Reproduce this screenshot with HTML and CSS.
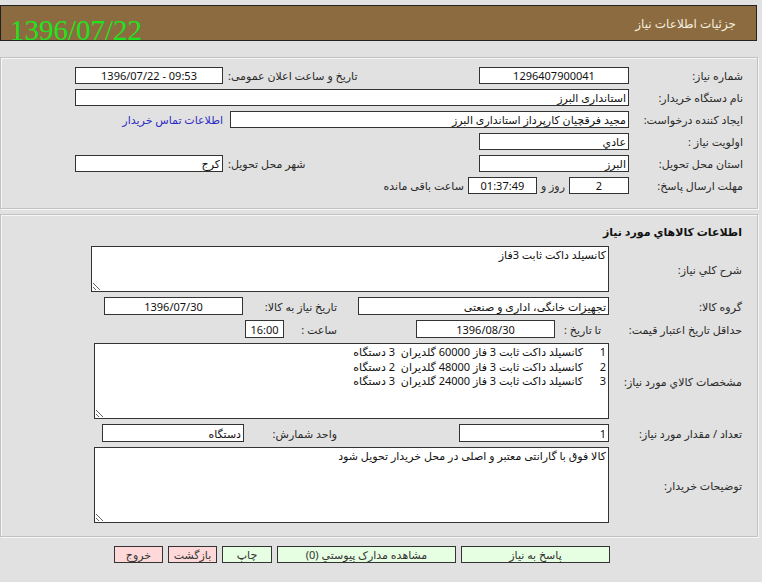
FILE: index.html
```html
<!DOCTYPE html>
<html lang="fa">
<head>
    <meta charset="UTF-8">
    <title>جزئیات اطلاعات نیاز</title>
    <link rel="stylesheet" href="styles.css">
</head>
<body>
<div class="page" dir="rtl">
    <div class="topbar">
        <span class="bar-title">جزئیات اطلاعات نیاز</span>
        <span class="bar-date" dir="ltr">1396/07/22</span>
    </div>

    <!-- need header info -->
    <div class="panel info">
        <div class="row">
            <span class="lbl">شماره نیاز:</span>
            <input class="fld w150 center" value="1296407900041" readonly>
            <span class="cell-end">تاریخ و ساعت اعلان عمومی:</span>
            <input class="fld w148 center" value="1396/07/22 - 09:53" dir="ltr" readonly>
        </div>
        <div class="row">
            <span class="lbl">نام دستگاه خریدار:</span>
            <input class="fld w554" value="استانداری البرز" readonly>
        </div>
        <div class="row">
            <span class="lbl">ایجاد کننده درخواست:</span>
            <input class="fld w399" value="مجید فرقچیان کارپرداز استانداری البرز" readonly>
            <a class="contact" href="#">اطلاعات تماس خریدار</a>
        </div>
        <div class="row">
            <span class="lbl">اولویت نیاز :</span>
            <input class="fld w150" value="عادي" readonly>
        </div>
        <div class="row">
            <span class="lbl">استان محل تحویل:</span>
            <input class="fld w150" value="البرز" readonly>
            <span class="cell-end">شهر محل تحویل:</span>
            <input class="fld w148" value="کرج" readonly>
        </div>
        <div class="row">
            <span class="lbl">مهلت ارسال پاسخ:</span>
            <input class="fld w60 center" value="2" readonly>
            <span class="txt">روز و</span>
            <input class="fld w69 center" value="01:37:49" readonly>
            <span class="txt">ساعت باقی مانده</span>
        </div>
    </div>

    <!-- goods -->
    <div class="panel goods">
        <div class="sec-title">اطلاعات کالاهاي مورد نیاز</div>
        <div class="rows">
            <div class="row">
                <span class="lbl">شرح کلي نیاز:</span>
                <textarea class="area w518 h46" readonly>کانسیلد داکت ثابت 3فاز</textarea>
            </div>
            <div class="row">
                <span class="lbl">گروه کالا:</span>
                <input class="fld w251 tall" value="تجهیزات خانگی، اداری و صنعتی" readonly>
                <span class="cell-mid c115">تاریخ نیاز به کالا:</span>
                <input class="fld w139 tall center" value="1396/07/30" readonly>
            </div>
            <div class="row">
                <span class="lbl-wide">
                    <span>حداقل تاریخ اعتبار قیمت:</span>
                    <span>تا تاریخ :</span>
                </span>
                <input class="fld w139 tall center" value="1396/08/30" readonly>
                <span class="cell-mid c132">ساعت :</span>
                <input class="fld w39 tall center" value="16:00" readonly>
            </div>
            <div class="row">
                <span class="lbl">مشخصات کالاي مورد نیاز:</span>
                <textarea class="area w515 h76 items" readonly>1	کانسیلد داکت ثابت 3 فاز 60000 گلدیران  3 دستگاه
2	کانسیلد داکت ثابت 3 فاز 48000 گلدیران  2 دستگاه
3	کانسیلد داکت ثابت 3 فاز 24000 گلدیران  3 دستگاه</textarea>
            </div>
            <div class="row">
                <span class="lbl">تعداد / مقدار مورد نیاز:</span>
                <input class="fld w150 tall" value="1" readonly>
                <span class="cell-mid c215">واحد شمارش:</span>
                <input class="fld w142 tall" value="دستگاه" readonly>
            </div>
            <div class="row">
                <span class="lbl">توضیحات خریدار:</span>
                <textarea class="area w515 h76" readonly>کالا فوق با گارانتی معتبر و اصلی در محل خریدار تحویل شود</textarea>
            </div>
        </div>
    </div>

    <div class="actions">
        <button class="btn go b149">پاسخ به نیاز</button>
        <button class="btn go b179">مشاهده مدارک پیوستي (0)</button>
        <button class="btn go b50">چاپ</button>
        <button class="btn stop b49">بازگشت</button>
        <button class="btn stop b49">خروج</button>
    </div>
</div>
</body>
</html>
```

FILE: styles.css
```css
body {
    margin: 0;
    background: #e1e1e1;
    font-family: "Noto Sans", "DejaVu Sans", sans-serif;
    font-size: 11px;
    color: #2a2a2a;
}
.page {
    width: 758px;
    padding-top: 5px;
}
.topbar {
    height: 36px;
    box-sizing: border-box;
    margin-right: 1px;
    background: #8c6b40;
    border: 1px solid #222;
    display: flex;
    justify-content: space-between;
    align-items: center;
}
.bar-title {
    color: #f3eedf;
    font-size: 12px;
    padding-right: 20px;
}
.bar-date {
    align-self: flex-end;
    margin-bottom: -5px;
    padding-left: 9px;
    font-family: "Liberation Serif", serif;
    font-size: 29px;
    line-height: 29px;
    color: #1ee41e;
}
.panel {
    border: 1px solid #c2c2c2;
    box-shadow: inset 1px 1px 0 #f6f6f6, 1px 1px 0 #f6f6f6;
}
.info {
    margin-top: 16px;
    padding: 6px 14px 12px 0;
}
.row {
    display: flex;
    align-items: center;
}
.info .row {
    height: 22px;
}
.lbl {
    flex: none;
    width: 114px;
    white-space: nowrap;
}
.goods .lbl {
    width: 133px;
}
.fld {
    box-sizing: border-box;
    flex: none;
    height: 17px;
    margin: 0;
    padding: 0 2px;
    border: 1px solid #333;
    background: #fff;
    font: inherit;
    color: #111;
}
.fld.tall { height: 18px; }
.center { text-align: center; }
.w39 { width: 39px; }
.w60 { width: 60px; }
.w69 { width: 69px; }
.w139 { width: 139px; }
.w142 { width: 142px; }
.w148 { width: 148px; }
.w150 { width: 150px; }
.w251 { width: 251px; }
.w399 { width: 399px; }
.w554 { width: 554px; }
.cell-end {
    flex: none;
    width: 256px;
    box-sizing: border-box;
    padding-left: 5px;
    text-align: left;
    white-space: nowrap;
}
.contact {
    margin-right: 7px;
    color: #2d2dc4;
    text-decoration: none;
}
.txt {
    margin: 0 4px;
    white-space: nowrap;
}
.goods {
    margin-top: 5px;
    padding: 8px 15px 13px 0;
}
.sec-title {
    font-weight: bold;
    font-size: 11px;
    line-height: 17px;
    margin-bottom: 6px;
    color: #111;
}
.rows {
    display: flex;
    flex-direction: column;
    gap: 5px;
}
.area {
    box-sizing: border-box;
    flex: none;
    margin: 0;
    padding: 1px 2px;
    border: 1px solid #333;
    background: #fff;
    font: inherit;
    line-height: 14.5px;
    color: #111;
    tab-size: 8;
    overflow: hidden;
}
.w515 { width: 515px; }
.w518 { width: 518px; }
.h46 { height: 46px; }
.h76 { height: 76px; }
.cell-mid {
    flex: none;
    box-sizing: border-box;
    white-space: nowrap;
}
.c115 { width: 115px; padding-right: 21px; }
.c132 { width: 132px; padding-right: 79px; }
.c215 { width: 215px; padding-right: 122px; }
.lbl-wide {
    flex: none;
    width: 187px;
    box-sizing: border-box;
    padding-left: 9px;
    display: flex;
    justify-content: space-between;
    white-space: nowrap;
}
.actions {
    display: flex;
    gap: 5px;
    margin-top: 9px;
    padding-right: 148px;
}
.btn {
    box-sizing: border-box;
    height: 17px;
    margin: 0;
    padding: 0;
    border: 1px solid #333;
    font: inherit;
    font-size: 11px;
    line-height: 15px;
    color: #333;
}
.go { background: #e6ffe2; }
.stop { background: #ffd9d9; }
.b49 { width: 49px; }
.b50 { width: 50px; }
.b149 { width: 149px; }
.b179 { width: 179px; }
```
